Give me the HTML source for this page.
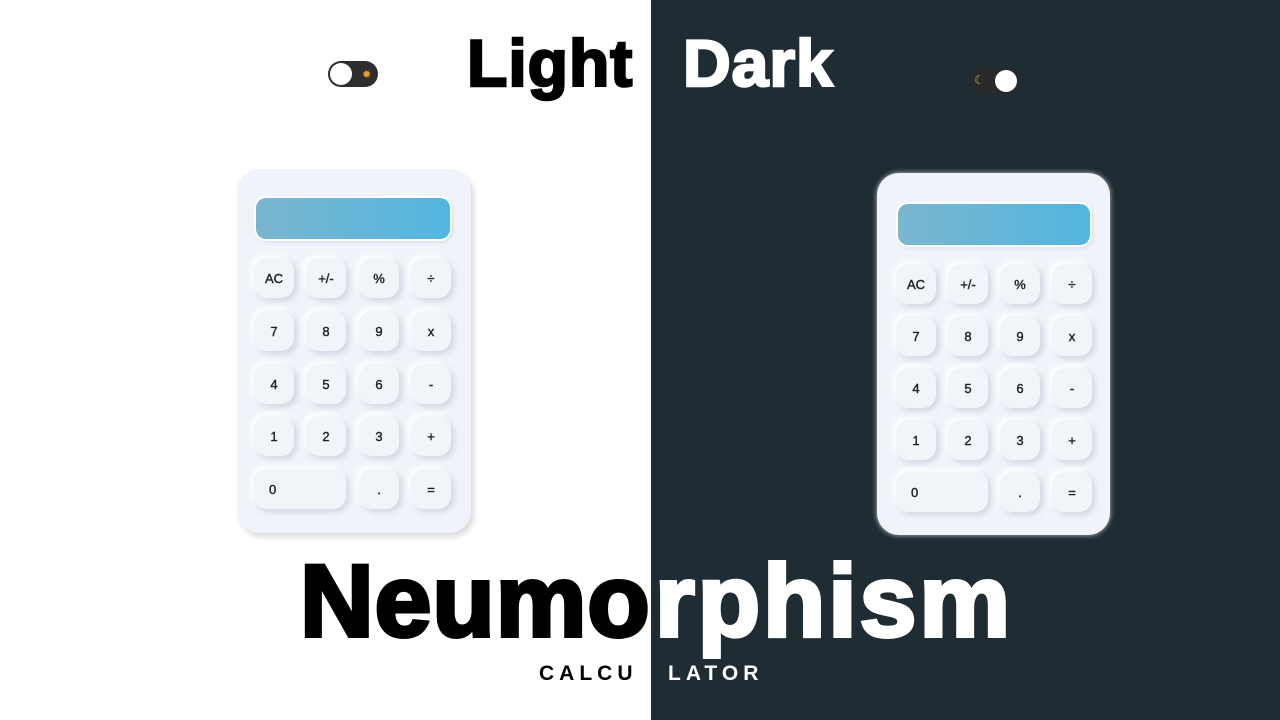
<!DOCTYPE html>
<html><head><style>
*{margin:0;padding:0;box-sizing:border-box}
body{width:1280px;height:720px;overflow:hidden;position:relative;background:#fff;font-family:"Liberation Sans",sans-serif}
.dark{position:absolute;left:651px;top:0;width:629px;height:720px;background:#1f2c34}
.t{position:absolute;font-weight:bold;white-space:nowrap;line-height:1}
.calc{position:absolute;background:#f0f3f9;border-radius:22px}
.disp{position:absolute;border-radius:10px;background:linear-gradient(90deg,#7ab6ce,#53b6e0);box-shadow:0 0 0 2px #fff,2px 2px 5px rgba(0,0,0,.15)}
.b{position:absolute;width:40px;height:40px;border-radius:13px;background:#f1f4f9;box-shadow:3px 3px 6px rgba(170,180,200,.45),-3px -3px 6px #fff;font-size:13px;font-weight:normal;-webkit-text-stroke:0.4px #222;color:#222;display:flex;align-items:center;justify-content:center}
</style></head><body>
<div class="dark"></div>
<div class="t" style="left:467px;top:30px;font-size:66px;color:#000;letter-spacing:1px;-webkit-text-stroke:2.5px #000">Light</div>
<div class="t" style="left:683px;top:30px;font-size:66px;color:#fff;letter-spacing:1px;-webkit-text-stroke:2.5px #fff">Dark</div>
<div style="position:absolute;left:328px;top:61px;width:50px;height:26px;border-radius:13px;background:#2e2e2e"></div>
<div style="position:absolute;left:330px;top:63px;width:22px;height:22px;border-radius:50%;background:#fff"></div>
<div style="position:absolute;left:362px;top:68px;color:#f0a020;font-size:11px">✹</div>
<div style="position:absolute;left:968px;top:68px;width:52px;height:26px;border-radius:13px;background:#29292a"></div>
<div style="position:absolute;left:995px;top:70px;width:22px;height:22px;border-radius:50%;background:#fff"></div>
<div style="position:absolute;left:974px;top:73px;color:#f0b020;font-size:12px">☾</div>

<div class="calc" style="left:237px;top:169px;width:234px;height:364px;box-shadow:3px 4px 6px rgba(0,0,0,.15)"></div>
<div class="disp" style="left:256px;top:198px;width:194px;height:41px"></div>
<div class="calc" style="left:877px;top:173px;width:233px;height:362px;box-shadow:0 0 4px 1px rgba(255,255,255,.5)"></div>
<div class="disp" style="left:898px;top:204px;width:192px;height:41px"></div>
<div id="btns"></div>
<div class="t" style="left:300px;top:550px;font-size:102px;color:#000;letter-spacing:1px;-webkit-text-stroke:4px #000">Neumo</div>
<div class="t" style="left:655px;top:550px;font-size:102px;color:#fff;letter-spacing:3px;-webkit-text-stroke:4px #fff">rphism</div>
<div class="t" style="left:539px;top:663px;font-size:21px;color:#000;letter-spacing:5px">CALCU</div>
<div class="t" style="left:668px;top:663px;font-size:21px;color:#fff;letter-spacing:5px">LATOR</div>
<script>
var L=[["AC","+/-","%","÷"],["7","8","9","x"],["4","5","6","-"],["1","2","3","+"],["0","",".","="]];
function g(xs,ys){var h="";for(var r=0;r<5;r++)for(var c=0;c<4;c++){var t=L[r][c];if(r==4&&c==1)continue;
var x=xs[c]-20,w=40,st="";if(r==4&&c==0){w=xs[1]+20-x;st="justify-content:flex-start;padding-left:15px;";}
h+='<div class="b" style="'+st+'left:'+x+'px;top:'+(ys[r]-20)+'px;width:'+w+'px">'+t+'</div>';}return h;}
document.getElementById("btns").innerHTML=g([274,326,379,431],[278,331,384,436,489])+g([916,968,1020,1072],[284,336,388,440,492]);
</script>
</body></html>
